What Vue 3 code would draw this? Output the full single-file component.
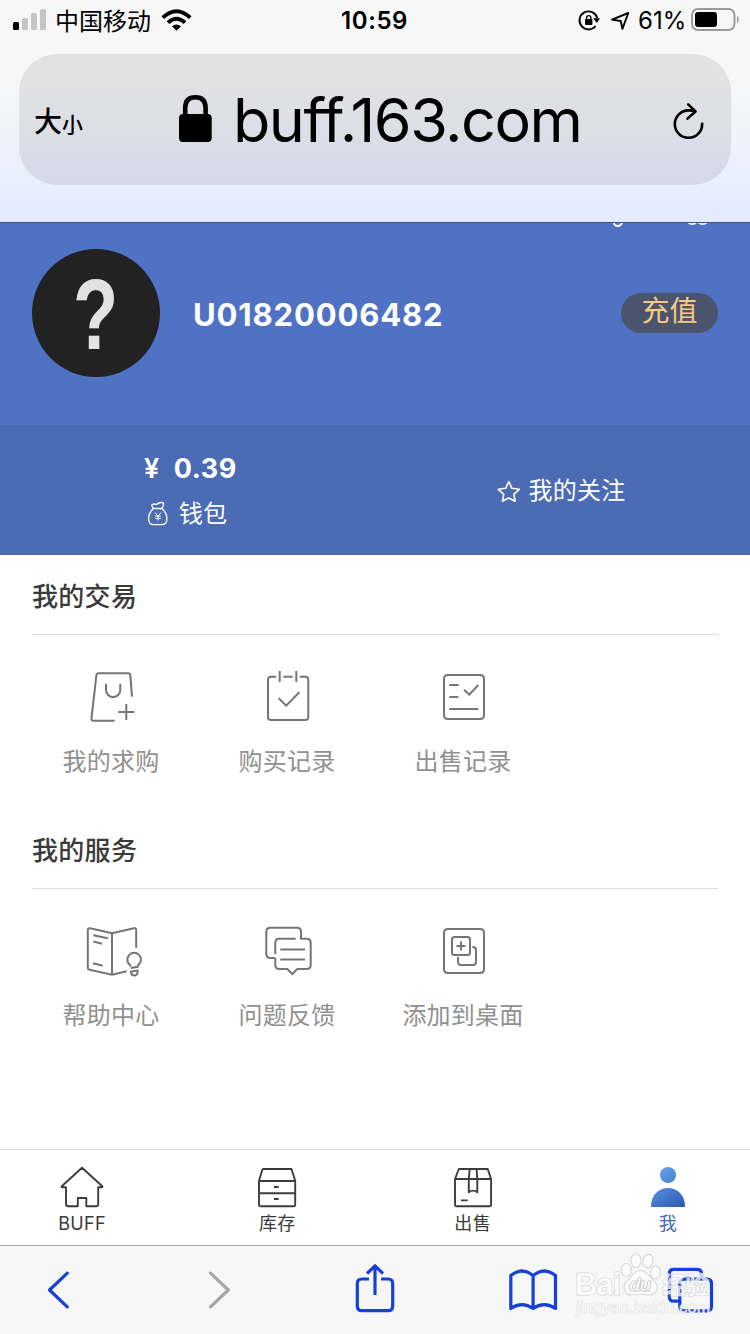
<script setup>
const sections = [
  {
    title: '我的交易',
    items: [
      { label: '我的求购', box: '79 665 64 64', lines: 'M114.7 720.7H93.5Q91.3 720.7 91.5 718.3L96.4 675.2Q96.6 673.3 98.6 673.3H128.2Q130.1 673.3 130.3 675.2L132 696.7M106 683.7V690A7.15 7.15 0 0 0 120.3 690V683.7M118.3 712H134.3M126.3 704V720' },
      { label: '购买记录', box: '255 665 64 64', lines: 'M276.3 676.7H271Q268 676.7 268 679.7V717Q268 720 271 720H305.3Q308.3 720 308.3 717V679.7Q308.3 676.7 305.3 676.7H299.7M283.3 676.7H292.7M279.7 671V682M296.3 671V682M278.7 698.3L286.2 705.7L299.3 692.3' },
      { label: '出售记录', box: '431 665 64 64', lines: 'M448 675H480Q484 675 484 679V715Q484 719 480 719H448Q444 719 444 715V679Q444 675 448 675ZM449.3 685H458.7M449.3 697H458.3M449.3 709H478.3M464 689.7L469.3 694.7L478.3 685' }
    ]
  },
  {
    title: '我的服务',
    items: [
      { label: '帮助中心', box: '79 919 64 64', lines: 'M136.2 948V930Q136.2 927.7 134 928.2L112 933.3L90 928.2Q87.8 927.8 87.8 930V967.5Q87.8 969.3 89.6 969.7L112 974.7L126.7 971.3M112 933.3V974.7M93.3 935.3L108 938.3M93.3 941.5L102 943.7M93 963.3L102.7 965.7M130.6 966.5Q130.5 965.5 129.5 964.6A6.8 6.8 0 1 1 138.8 964.6Q137.8 965.5 137.5 966.8L130.8 968M130.8 971.8L137.6 970.5V972.5Q137.3 975.5 134.3 975.5Q131.4 975.5 130.8 972Z' },
      { label: '问题反馈', box: '255 919 64 64', lines: 'M275 958H270.3Q266.3 958 266.3 954V931.7Q266.3 927.7 270.3 927.7H297Q301 927.7 301 931.7V938.7H306.7Q310.7 938.7 310.7 942.7V965Q310.7 969 306.7 969H297.3L292.3 974L287.3 969H279.3Q275.3 969 275.3 965V958M275.3 954V942.7Q275.3 938.7 279.3 938.7H295.7M280.3 949.5H305M280.3 959.5H305' },
      { label: '添加到桌面', box: '431 919 64 64', lines: 'M448 929H480Q484 929 484 933V969Q484 973 480 973H448Q444 973 444 969V933Q444 929 448 929ZM454.5 937H467.5Q470 937 470 939.5V952.5Q470 955 467.5 955H454.5Q452 955 452 952.5V939.5Q452 937 454.5 937ZM456.5 946H465.5M461 941.5V950.5M458 957V962Q458 965 461 965H473Q476 965 476 962V950Q476 947 473 947H472.3' }
    ]
  }
]
const tabs = [
  { label: 'BUFF', box: '57 1164 50 46', lines: 'M66 1187.3H62.5Q61 1187 62 1186L82 1167.8L102 1186Q103 1187 101.5 1187.3H98.2V1204Q98.2 1206.2 96 1206.2H86.3V1198H77.8V1206.2H68.2Q66 1206.2 66 1204Z' },
  { label: '库存', box: '252 1164 50 46', lines: 'M263 1169H291.5L295.2 1180.7V1205Q295.2 1206.2 294 1206.2H260.2Q259 1206.2 259 1205V1180.7L262.2 1170ZM259 1181H295M259 1193.3H295M274 1187H278.7M274 1199H278.7' },
  { label: '出售', box: '448 1164 50 46', lines: 'M459 1169H487.7L491.1 1179V1205Q491.1 1206.2 490 1206.2H456.2Q455 1206.2 455 1205V1179L458.4 1170ZM455 1179H491M469.7 1169L468.8 1179V1192.2Q473 1189 477.3 1192.2V1179L476.6 1169M461 1200.4H467.7' },
  { label: '我', box: '643 1164 50 46', active: true }
]
const tools = [
  { name: 'back', box: '30 1260 60 60', lines: 'M67.3 1273.2L49.5 1290L67.3 1306.8' },
  { name: 'forward', box: '187.500 1260 60 60', lines: 'M210 1273.2L227.8 1290L210 1306.8' },
  { name: 'share', box: '345 1260 60 60', lines: 'M369 1279H362Q357.3 1279 357.3 1283.7V1306Q357.3 1310.7 362 1310.7H388Q392.7 1310.7 392.7 1306V1283.7Q392.7 1279 388 1279H381M375 1295V1266M367 1273.5L375 1265.8L383 1273.5' },
  { name: 'bookmarks', box: '502.500 1260 60 60', lines: 'M510.3 1308.5V1275.5Q521.5 1266.5 532.6 1275.5Q543.8 1266.5 555 1275.5V1308.5Q543.8 1300.7 532.6 1308.5Q521.5 1300.7 510.3 1308.5ZM532.6 1275.5V1308.5' },
  { name: 'pages', box: '660 1260 60 60', lines: 'M679.7 1301.2H673.8Q669.3 1301.2 669.3 1296.7V1273.8Q669.3 1269.3 673.8 1269.3H697Q701.5 1269.3 701.5 1273.8V1279.2M684.3 1279.2H707Q711.5 1279.2 711.5 1283.7V1306.3Q711.5 1310.8 707 1310.8H684.3Q679.8 1310.8 679.8 1306.3V1283.7Q679.8 1279.2 684.3 1279.2Z' }
]
</script>

<template>
  <div class="screen">
    <header class="browser">
      <div class="status">
        <div class="left">
          <svg class="signal" viewBox="13 8 34 24">
            <rect x="13" y="22" width="6" height="8" rx="1.5" fill="#000" />
            <rect x="22" y="18" width="6" height="12" rx="1.5" />
            <rect x="31" y="13" width="6" height="17" rx="1.5" />
            <rect x="40" y="9" width="6" height="21" rx="1.5" />
          </svg>
          <span class="carrier">中国移动</span>
          <svg class="wifi" viewBox="160 8 34 24" fill="none" stroke="#000" stroke-width="3.8">
            <path d="M162.8 17.6Q176.5 5 190.2 17.6M168 22.7Q176.5 14.8 185 22.7" />
            <path d="M172 26.3Q176.5 22.6 181 26.3L176.5 30.7Z" fill="#000" stroke="none" />
          </svg>
        </div>
        <span class="time">10:59</span>
        <div class="right">
          <svg class="rotation" viewBox="577 8 24 24" fill="none" stroke="#000" stroke-width="1.9">
            <path d="M597.2 18A9 9 0 1 0 595.6 26" />
            <path d="M593.2 18.3H600L596.9 22.9Z" fill="#000" stroke="none" />
            <rect x="585" y="19" width="7.4" height="6" rx=".8" fill="#000" stroke="none" />
            <path d="M586.6 19.5V17.7A2.1 2.1 0 0 1 590.8 17.7V19.5" stroke-width="1.4" />
          </svg>
          <svg class="location" viewBox="609 8 22 24" fill="none" stroke="#000" stroke-width="1.9" stroke-linejoin="round">
            <path d="M628.3 13L612 19.6L620.7 21L622.4 28.9Z" />
          </svg>
          <span class="percent">61%</span>
          <svg class="battery" viewBox="690 7 50 26">
            <rect x="692" y="9" width="42.5" height="21" rx="6" fill="none" stroke="#999" stroke-width="1.9" />
            <rect x="695" y="12" width="22" height="15" rx="3" />
            <path d="M737 15.5Q740.5 19.5 737 23.5Z" fill="#999" />
          </svg>
        </div>
      </div>
      <div class="address">
        <div class="textsize"><span class="da">大</span><span class="xiao">小</span></div>
        <div class="site">
          <svg class="lock" viewBox="178 92 36 52">
            <path d="M185.2 117V108Q185.2 97.2 195.4 97.2Q205.6 97.2 205.6 108V117" fill="none" stroke="#000" stroke-width="4.6" />
            <rect x="179" y="114" width="32.7" height="28" rx="4" />
          </svg>
          <span class="domain">buff.163.com</span>
        </div>
        <svg class="reload" viewBox="670 98 36 42" fill="none" stroke="#000" stroke-width="2.6" stroke-linecap="round" stroke-linejoin="round">
          <path d="M695.5 110.3Q692 109.4 688.7 109.4A13.7 13.7 0 1 0 702.2 122.8M688.2 103.4L695.5 110.5L687.5 117.6" />
        </svg>
      </div>
    </header>

    <section class="profile">
      <svg class="clipped" viewBox="600 223 120 8" fill="none" stroke="#fff" stroke-width="1.8">
        <path d="M613.4 221.5Q614.2 226 617.8 226Q621.4 226 622.2 221.5M687 221Q692 227 697.5 221.500Q703 227 708.500 221" />
      </svg>
      <div class="avatar"><span>?</span></div>
      <strong class="user">U01820006482</strong>
      <button class="recharge">充值</button>
    </section>

    <section class="strip">
      <div class="wallet">
        <div class="amount"><span class="yen">¥</span> 0.39</div>
        <div class="row">
          <svg class="purse" viewBox="146 500 24 26" fill="none" stroke="#fff" stroke-width="1.3" stroke-linejoin="round">
            <path d="M153.5 507.5C149 511.5 148.5 517 148.7 519Q149 523.7 154 523.7H161.5Q166.5 523.7 166.8 519C167 517 166.5 511.5 162 507.5ZM153.5 507.5Q151.3 505 152 503.5Q154.5 502.5 156.5 503.5Q160 500.5 163.5 502Q163.8 504.5 162 507.5" />
            <path d="M155 511.5L158 515.2L161 511.5M158 515.2V519.5M155.2 515.2H160.8M155.2 517.4H160.8" stroke-width="1" />
          </svg>
          <span>钱包</span>
        </div>
      </div>
      <div class="follow">
        <svg class="star" viewBox="497 479 26 26" fill="none" stroke="#fff" stroke-width="1.6" stroke-linejoin="round">
          <path d="M509.8 481.5L512.9 488.3L520.3 489.3L514.8 494.3L516.2 501.2L509.8 498L503.4 501.2L504.8 494.3L499.3 489.3L506.7 488.3Z" />
        </svg>
        <span>我的关注</span>
      </div>
    </section>

    <main class="content">
      <section v-for="s in sections" :key="s.title" class="group">
        <h2>{{ s.title }}</h2>
        <div class="entries">
          <div v-for="i in s.items" :key="i.label" class="entry">
            <svg :viewBox="i.box"><path :d="i.lines" /></svg>
            <span>{{ i.label }}</span>
          </div>
        </div>
      </section>
    </main>

    <nav class="tabs">
      <div v-for="t in tabs" :key="t.label" class="tab" :class="{ active: t.active }">
        <svg :viewBox="t.box">
          <template v-if="t.active">
            <defs>
              <linearGradient id="me" gradientUnits="userSpaceOnUse" x1="655" y1="1170" x2="684" y2="1208">
                <stop offset="0" stop-color="#61a7ea" />
                <stop offset="1" stop-color="#2d56b2" />
              </linearGradient>
            </defs>
            <circle cx="668" cy="1175" r="8" fill="url(#me)" />
            <path d="M651 1207Q651 1198 656 1193Q661 1188 668 1188Q675 1188 680 1193Q685 1198 685 1207Z" fill="url(#me)" />
          </template>
          <path v-else :d="t.lines" class="outline" />
        </svg>
        <span>{{ t.label }}</span>
      </div>
    </nav>

    <footer class="toolbar">
      <svg v-for="t in tools" :key="t.name" :viewBox="t.box" :class="t.name"><path :d="t.lines" /></svg>
      <svg class="watermark" viewBox="570 1246 150 78">
        <g class="mark">
          <ellipse cx="626.3" cy="1270" rx="5" ry="6.5" />
          <ellipse cx="636" cy="1260.5" rx="5" ry="7" />
          <ellipse cx="648" cy="1261" rx="5" ry="6.7" transform="rotate(10 648 1261)" />
          <ellipse cx="655.5" cy="1272.5" rx="5" ry="6.5" />
          <path d="M640.5 1270.5C634 1270.5 631 1278 626.5 1281.5C622 1286 624 1295 632 1295Q640.5 1293.5 649 1295C657 1295 660 1286 654.5 1281.5C650 1278 647 1270.5 640.5 1270.5Z" />
          <text x="575" y="1295" class="bai" textLength="46">Bai</text>
          <text x="629" y="1291" class="du" textLength="22">du</text>
          <text x="662" y="1294" class="jing" textLength="47">经验</text>
          <text x="576" y="1313" class="url" textLength="134">jingyan.baidu.com</text>
        </g>
      </svg>
    </footer>
  </div>
</template>

<style>
body { background: #fff; }
</style>

<style scoped>
.screen { width: 750px; height: 1334px; display: flex; flex-direction: column; overflow: hidden; background: #fff; color: #333; font-family: Inter, "Noto Sans CJK SC", sans-serif; }
.screen * { box-sizing: border-box; }
svg { display: block; flex: none; }
.browser { height: 223px; flex: none; background: linear-gradient(#f7f7f7 0 35%, #e8effd 80%, #e3ebfc); border-bottom: 1px solid #3c5591; color: #000; }
.status { height: 54px; display: grid; grid-template-columns: 1fr 80px 1fr; align-items: center; padding: 0 10px 14px 13px; }
.left, .right { display: flex; align-items: center; }
.right { justify-content: flex-end; }
.signal { width: 34px; height: 24px; fill: #c5c5c5; }
.carrier { width: 98px; margin: 3px 7px 0 8px; font-size: 24px; line-height: 30px; white-space: nowrap; }
.wifi { width: 34px; height: 24px; }
.time { font-size: 24px; font-weight: 600; line-height: 30px; padding: 2px 4px 0 0; text-align: center; letter-spacing: .6px; white-space: nowrap; }
.rotation { width: 24px; height: 24px; }
.location { width: 22px; height: 24px; margin-left: 8px; }
.percent { width: 50px; margin: 2px 2px 0 7px; font-size: 24px; line-height: 30px; white-space: nowrap; }
.battery { width: 50px; height: 26px; }
.address { height: 131px; margin: 0 19px; border-radius: 38px; background: linear-gradient(#e2e2e2 15%, #dcdee6 60%, #d4daea); display: flex; align-items: center; padding: 0 25px 0 15px; }
.textsize { width: 50px; display: flex; align-items: baseline; padding-top: 7px; line-height: 36px; font-weight: 500; }
.da { font-size: 28px; }
.xiao { font-size: 21px; }
.site { flex: 1; display: flex; align-items: center; margin-left: 94px; font-size: 61px; line-height: 76px; white-space: nowrap; }
.domain { letter-spacing: -1.5px; }
.lock { width: 36px; height: 52px; margin: -4px 19px 0 0; }
.reload { width: 36px; height: 42px; }
.profile { position: relative; height: 202px; flex: none; display: flex; align-items: flex-start; background: #5072c4; padding: 26px 32px 0; }
.clipped { position: absolute; left: 600px; top: 0; width: 120px; height: 8px; }
.avatar { width: 128px; height: 128px; border-radius: 50%; background: #222; color: #e2e2e2; font: 700 100px/130px "Liberation Sans", sans-serif; text-align: center; }
.avatar span { display: inline-block; transform: scaleX(.74); }
.user { margin-left: 33px; flex: 1; color: #fff; font-size: 31px; font-weight: 700; letter-spacing: .85px; line-height: 131px; }
.recharge { width: 97px; height: 40px; margin-top: 44px; padding: 0 0 7px; border: 0; border-radius: 20px; background: #4a546c; color: #f4c986; font: 28px/33px "Noto Sans CJK SC", sans-serif; }
.strip { height: 130px; flex: none; display: grid; grid-template-columns: 1fr 1fr; background: #4b6bb5; color: #fff; font-size: 24px; }
.wallet { padding: 27px 0 0 144px; }
.amount { font-size: 27px; line-height: 34px; font-weight: 700; letter-spacing: .6px; }
.yen { font-weight: 600; margin-right: 7px; }
.row { display: flex; align-items: center; height: 30px; margin: 13px 0 0 2px; line-height: 30px; }
.purse { width: 24px; height: 26px; margin-right: 9px; }
.follow { display: flex; align-items: center; justify-content: center; gap: 6px; padding-right: 3px; }
.follow span { margin-top: -3px; letter-spacing: .3px; }
.star { width: 26px; height: 26px; margin-top: 3px; }
.content { flex: 1; }
.group { height: 254px; }
h2 { margin: 0 32px; height: 80px; border-bottom: 1px solid #ddd; font-size: 26px; line-height: 83px; letter-spacing: .3px; font-weight: 500; color: #3a3a3a; }
.entries { display: flex; padding: 30px 0 0 23px; }
.entry { width: 176px; display: flex; flex-direction: column; align-items: center; gap: 18px; font-size: 24px; line-height: 30px; letter-spacing: .25px; color: #909090; white-space: nowrap; }
.entry svg { width: 64px; height: 64px; fill: none; stroke: #757575; stroke-width: 2; }
.tabs { height: 96px; flex: none; border-top: 1px solid #ddd; display: flex; justify-content: space-between; padding: 14px 33px 0; background: #fff; }
.tab { width: 98px; display: flex; flex-direction: column; align-items: center; font-size: 18px; line-height: 27px; letter-spacing: .3px; color: #3a3a3a; }
.tab svg { width: 50px; height: 46px; }
.tab.active { color: #4668b8; }
.outline { fill: none; stroke: #3c3c3c; stroke-width: 1.9; stroke-linejoin: round; }
.toolbar { position: relative; height: 89px; flex: none; border-top: 1px solid #aaa; background: #f7f7f7; display: flex; justify-content: space-between; padding: 14px 30px 0; }
.toolbar > svg { width: 60px; height: 60px; fill: none; stroke: #1740d8; stroke-width: 3.2; stroke-linecap: round; stroke-linejoin: round; }
.toolbar > .forward { stroke: #a6a6a6; }
.toolbar > .share path { stroke-linecap: butt; }
.toolbar > .watermark { position: absolute; left: 570px; top: 0; width: 150px; height: 78px; stroke-width: 1.2; }
.mark { fill: rgba(255, 255, 255, .7); stroke: rgba(205, 205, 205, .75); }
.mark text { paint-order: stroke; }
.bai { font: 700 31px "Liberation Sans", sans-serif; }
.du { font: italic 700 19px "Liberation Sans", sans-serif; stroke: #bbb; }
.jing { font: 700 24px "Noto Sans CJK SC", sans-serif; }
.url { font: 16px "Liberation Sans", sans-serif; stroke: rgba(215, 215, 215, .7); }
</style>
